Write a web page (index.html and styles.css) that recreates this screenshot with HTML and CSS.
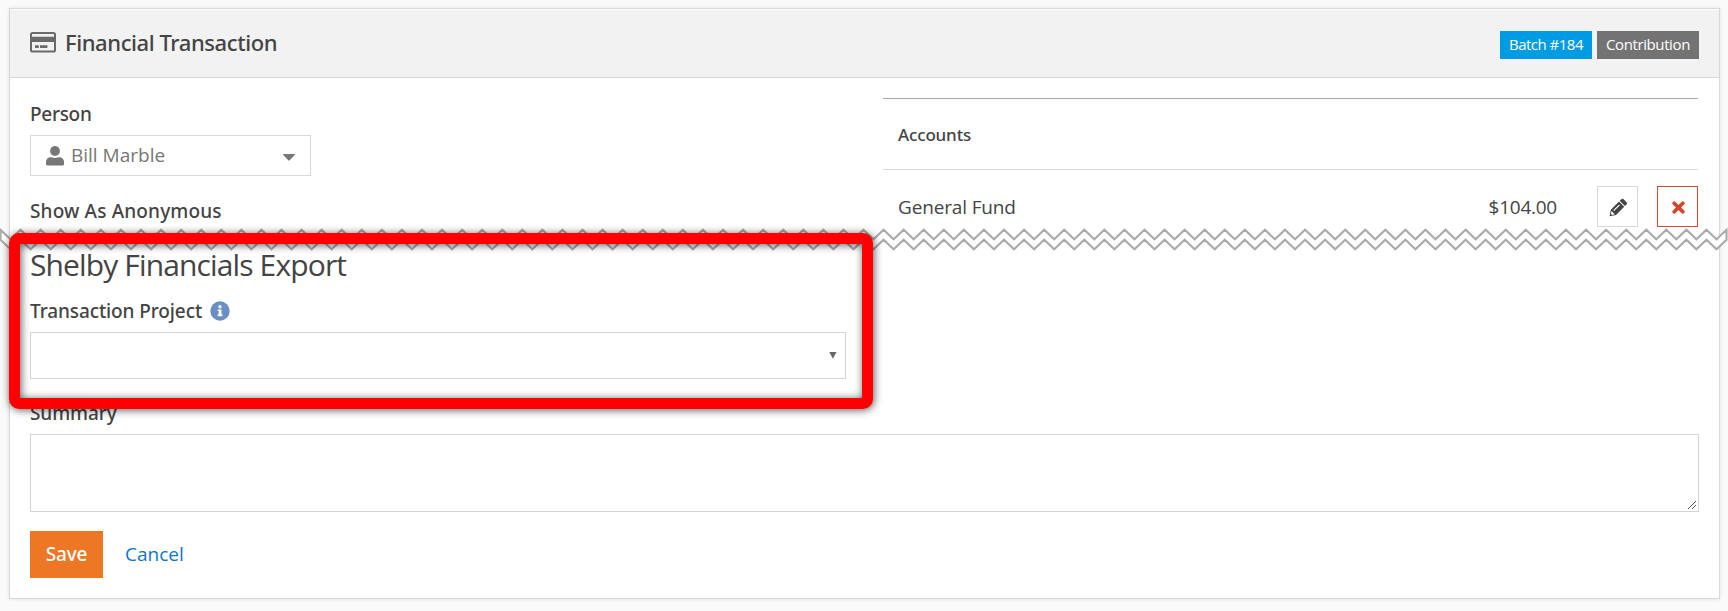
FILE: index.html
```html
<!DOCTYPE html>
<html lang="en">
<head>
<meta charset="utf-8">
<title>Financial Transaction</title>
<link rel="stylesheet" href="styles.css">
</head>
<body>
<main class="panel">
  <header class="panel-heading">
    <h1 class="panel-title">
      <svg class="title-icon" width="26" height="21" viewBox="0 0 26 21"><rect x="1" y="1" width="24" height="18.500" rx="1.600" fill="none" stroke="#6a6a6a" stroke-width="2"/><path d="M1 4.800h24v5.200H1zM5 13.300h3.800v2.600H5zM10 13.300h7.400v2.600H10z" fill="#6a6a6a"/></svg>
      <span class="title-text">Financial Transaction</span>
    </h1>
    <div class="panel-labels">
      <span class="badge badge-info"><span class="batch-text">Batch #184</span></span>
      <span class="badge badge-type"><span class="type-text">Contribution</span></span>
    </div>
  </header>
  <form class="panel-body">
    <div class="columns">
      <section class="details">
        <label class="label label-person">Person</label>
        <div class="picker">
          <svg width="18" height="20" viewBox="0 0 18 20"><circle cx="9" cy="5" r="4.900" fill="#777"/><path d="M0 18v-2.200a4.600 4.600 0 0 1 4.600-4.600c1.500 0 2 .7 4.400.7s2.900-.7 4.400-.7A4.600 4.600 0 0 1 18 15.800V18a1.600 1.600 0 0 1-1.600 1.600H1.600A1.600 1.600 0 0 1 0 18z" fill="#777"/></svg>
          <span class="picker-name">Bill Marble</span>
          <svg class="caret" width="12" height="7" viewBox="0 0 12 7"><path d="M.6 0h10.800c.6 0 .7.500.3.900L6.700 6.300a1 1 0 0 1-1.400 0L.3.900C-.1.500 0 0 .6 0z" fill="#777"/></svg>
        </div>
        <label class="label label-anonymous">Show As Anonymous</label>
        <h2 class="section-title">Shelby Financials Export</h2>
        <label class="label label-project"><span>Transaction Project</span>
          <svg class="info" width="20" height="20" viewBox="0 0 20 20"><circle cx="10" cy="10" r="9.700" fill="#6a8fc5"/><circle cx="10" cy="5.800" r="1.700" fill="#fff"/><path d="M7.700 8.400h3.800v5.200h1v1.700H7.700v-1.700h1v-3.500h-1z" fill="#fff"/></svg>
        </label>
        <div class="select"><svg width="8" height="7" viewBox="0 0 8 7"><path d="M.3 0h7.200L3.900 6.800z" fill="#666"/></svg></div>
      </section>
      <section class="accounts">
        <div class="accounts-head">Accounts</div>
        <div class="account-row">
          <span class="fund">General Fund</span>
          <span class="amount">$104.00</span>
          <span class="icon-btn"><svg width="19" height="19" viewBox="0 0 19 19"><g transform="translate(.6 18.200) rotate(-45)" fill="#444"><path fill-rule="evenodd" d="M0 0L5.400-3.700H17V3.700H5.400zM6.800-1.600V-.5H15V-1.600zM2.700-.9V.9L5 2.300V-2.300z"/><path d="M18-3.700h2.200a1.700 1.700 0 0 1 1.700 1.700v4a1.700 1.700 0 0 1-1.700 1.700H18z"/></g></svg></span>
          <span class="icon-btn icon-btn-delete"><svg width="13" height="13" viewBox="0 0 13 13"><path d="M2.200 2.200l8.600 8.600M10.800 2.200l-8.600 8.600" stroke="#d4442e" stroke-width="3.700" stroke-linecap="round"/></svg></span>
        </div>
      </section>
    </div>
    <label class="label label-summary">Summary</label>
    <div class="textarea"><svg width="8" height="8" viewBox="0 0 8 8" shape-rendering="crispEdges"><path d="M0 7.500h1M1 6.500h1M2 5.500h1M3 4.500h1M4 3.500h1M5 2.500h1M6 1.500h1M7 .5h1M4 7.500h1M5 6.500h1M6 5.500h1M7 4.500h1" stroke="#555"/></svg></div>
    <div class="actions"><span class="save">Save</span><span class="cancel">Cancel</span></div>
  </form>
</main>
<svg class="tear" width="1728" height="24" viewBox="0 0 1728 24"><path id="tear-band" fill="#fff" stroke="#aaa" stroke-width="2.100"/></svg>
<div class="highlight"></div>
<script src="tear.js"></script>
</body>
</html>
```
FILE: styles.css
```css
* { box-sizing: border-box; }
body { margin: 0; padding: 8px 8px 0 9px; height: 611px; overflow: hidden; position: relative; background: #fafafa; color: #444; font: 19px/27px "Open Sans", sans-serif; }
h1, h2 { margin: 0; }
svg { display: block; flex: none; }
.panel { width: 1711px; height: 591px; background: #fff; border: 1px solid #d8d8d8; padding-top: 1px; box-shadow: 0 0 4px rgba(0,0,0,.1); }
.panel-heading { height: 68px; padding: 0 20px; background: #f2f2f2; border-bottom: 1px solid #d8d8d8; display: flex; justify-content: space-between; align-items: flex-start; }
.panel-title { display: flex; gap: 9px; padding-top: 17px; font: 500 22px/30px "Noto Sans", sans-serif; color: #444; }
.title-icon { margin-top: 5px; }
.title-text { letter-spacing: -.42px; }
.panel-labels { display: flex; gap: 5px; padding-top: 21px; }
.badge { height: 28px; color: #fff; font-size: 15px; line-height: 27px; text-align: center; }
.badge-info { width: 92px; background: #009ce3; }
.badge-type { width: 102px; background: #737373; }
.batch-text { letter-spacing: -.5px; }
.type-text { letter-spacing: -.4px; }
.panel-body { padding: 20px 20px 0; }
.columns { display: grid; grid-template-columns: 816px 815px; gap: 37px; height: 302px; }
.details { display: flex; flex-direction: column; padding-top: 3px; }
.label { font-family: "Noto Sans", sans-serif; font-weight: 500; display: block; }
.label-person { margin-bottom: 7px; letter-spacing: -.3px; }
.picker { display: flex; align-items: center; width: 281px; height: 41px; border: 1px solid #d8d8d8; padding: 0 15px; color: #777; }
.picker-name { margin-left: 7px; line-height: 39px; }
.caret { margin-left: auto; margin-top: 3px; }
.label-anonymous { margin-top: 22px; letter-spacing: .15px; }
.section-title { margin-top: 20px; font-size: 30px; line-height: 40px; font-weight: 400; letter-spacing: -.87px; }
.label-project { margin-top: 13px; display: flex; align-items: center; gap: 8px; letter-spacing: -.1px; }
.info { margin-top: -1px; }
.select { margin-top: 7px; height: 47px; border: 1px solid #d4d4d4; display: flex; align-items: center; justify-content: flex-end; padding-right: 8px; }
.accounts-head { height: 72px; border-top: 1px solid #aaa; border-bottom: 1px solid #d8d8d8; padding: 0 15px; font: 500 17px/71px "Noto Sans", sans-serif; letter-spacing: -.15px; }
.account-row { display: flex; align-items: center; padding: 16px 0 0 15px; }
.fund { flex: 1; padding-top: 2px; letter-spacing: -.15px; }
.amount { margin-right: 40px; padding-top: 2px; letter-spacing: -.25px; }
.icon-btn { width: 41px; height: 41px; border: 1px solid #d8d8d8; display: flex; align-items: center; justify-content: center; padding: 1px 0 0 1px; }
.icon-btn-delete { margin-left: 19px; border-color: #d4442e; }
.label-summary { letter-spacing: -.1px; }
.textarea { margin-top: 7px; height: 78px; border: 1px solid #d4d4d4; display: flex; align-items: flex-end; justify-content: flex-end; padding: 2px; }
.actions { margin-top: 19px; display: flex; gap: 22px; line-height: 47px; }
.save { width: 73px; height: 47px; background: #ee7725; color: #fff; text-align: center; font-family: "Noto Sans", sans-serif; font-weight: 500; letter-spacing: -.2px; }
.cancel { color: #0f76c9; }
.tear { position: absolute; left: 0; top: 227px; }
.highlight { position: absolute; left: 9px; top: 233px; width: 864px; height: 176px; border: 11px solid #f00; border-radius: 10px; filter: drop-shadow(1px 1px 4px rgba(0,0,0,.65)); }
```
FILE: tear.js
```javascript
// Builds the zigzag band that marks the omitted part of the form.
const step = 20.07;
const upper = [];
const lower = [];
for (let i = 0; i <= 86; i++) {
  const x = 0.5 + i * step;
  upper.push(x + ' 2.8');
  lower.push(x + ' 12.8');
  if (i < 86) {
    upper.push((x + step / 2) + ' 12.2');
    lower.push((x + step / 2) + ' 22.2');
  }
}
document.getElementById('tear-band').setAttribute('d', 'M' + upper.join('L') + 'L' + lower.reverse().join('L') + 'Z');
```
